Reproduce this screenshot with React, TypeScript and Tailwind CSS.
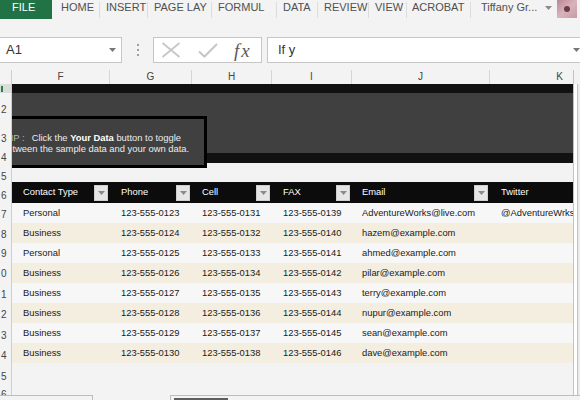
import { Fragment } from "react";

const tabs = [
  { label: "HOME", cls: "w-[48px] pl-[9px]" },
  { label: "INSERT", cls: "w-[48px] pl-[6px]" },
  { label: "PAGE LAY", cls: "w-[64px] pl-[6px]" },
  { label: "FORMUL", cls: "w-[65px] pl-[6px]" },
  { label: "DATA", cls: "w-[41px] pl-[6px]" },
  { label: "REVIEW", cls: "w-[51px] pl-[6px]" },
  { label: "VIEW", cls: "w-[38px] pl-[6px]" },
  { label: "ACROBAT", cls: "w-[64px] pl-[5px]" },
];

const cols = [
  { letter: "F", w: "w-[98px]", pl: "pl-[11px]" },
  { letter: "G", w: "w-[82px]", pl: "pl-[11px]" },
  { letter: "H", w: "w-[80px]", pl: "pl-[10px]" },
  { letter: "I", w: "w-[80px]", pl: "pl-[11px]" },
  { letter: "J", w: "w-[138px]", pl: "pl-[10px]" },
  { letter: "K", w: "w-[140px]", pl: "pl-[11px]" },
];

const headers = ["Contact Type", "Phone", "Cell", "FAX", "Email", "Twitter"];

const rows = [
  ["Personal", "123-555-0123", "123-555-0131", "123-555-0139", "AdventureWorks@live.com", "@AdventureWrks"],
  ["Business", "123-555-0124", "123-555-0132", "123-555-0140", "hazem@example.com", ""],
  ["Personal", "123-555-0125", "123-555-0133", "123-555-0141", "ahmed@example.com", ""],
  ["Business", "123-555-0126", "123-555-0134", "123-555-0142", "pilar@example.com", ""],
  ["Business", "123-555-0127", "123-555-0135", "123-555-0143", "terry@example.com", ""],
  ["Business", "123-555-0128", "123-555-0136", "123-555-0144", "nupur@example.com", ""],
  ["Business", "123-555-0129", "123-555-0137", "123-555-0145", "sean@example.com", ""],
  ["Business", "123-555-0130", "123-555-0138", "123-555-0146", "dave@example.com", ""],
];

const rowHeads = [
  { h: "h-[31px]", n: "2", pt: "pt-[12px]" },
  { h: "h-[29px]", n: "3", pt: "pt-[10px]" },
  { h: "h-[10px]", n: "4", pt: "pt-0" },
  { h: "h-[19px]", n: "5", pt: "pt-[9px]" },
  { h: "h-[21px]", n: "6", pt: "pt-[9px]" },
  { h: "h-[20px]", n: "7", pt: "pt-[7px]" },
  { h: "h-[20px]", n: "8", pt: "pt-[7px]" },
  { h: "h-[20px]", n: "9", pt: "pt-[6px]" },
  { h: "h-[20px]", n: "0", pt: "pt-[6px]" },
  { h: "h-[20px]", n: "1", pt: "pt-[7px]" },
  { h: "h-[20px]", n: "2", pt: "pt-[7px]" },
  { h: "h-[20px]", n: "3", pt: "pt-[8px]" },
  { h: "h-[20px]", n: "4", pt: "pt-[8px]" },
  { h: "h-[20px]", n: "5", pt: "pt-[9px]" },
  { h: "h-[20px]", n: "6", pt: "pt-[7px]" },
];

function Caret({ color = "#7a7a7a" }: { color?: string }) {
  return (
    <svg width="7" height="4" viewBox="0 0 7 4">
      <path d="M0 0H7L3.5 4Z" fill={color} />
    </svg>
  );
}

function FilterButton() {
  return (
    <div className="flex h-[16px] w-[14px] shrink-0 items-center justify-center border border-[#cfcfcf] bg-[#e6e6e6]">
      <Caret color="#8a8a8a" />
    </div>
  );
}

export default function App() {
  return (
    <div className="flex h-[400px] w-[580px] flex-col overflow-hidden bg-[#f3f3f3] font-['Liberation_Sans',Arial,sans-serif] text-[#222]">
      {/* ribbon tabs */}
      <div className="flex h-[19px] shrink-0 text-[11px] leading-[15px] text-[#505050]">
        <div className="h-full w-[52px] bg-[#217346] pl-[12px] text-white">FILE</div>
        {tabs.map((t) => (
          <div key={t.label} className={`${t.cls} flex h-full items-start justify-between`}>
            <span className="whitespace-nowrap">{t.label}</span>
            <span className="mt-[2px] h-[16px] w-px bg-[#dcdcdc]" />
          </div>
        ))}
        <div className="flex flex-1 items-start pl-[10px]">
          <span className="whitespace-nowrap">Tiffany Gr...</span>
          <span className="ml-[8px] mt-[6px]">
            <Caret color="#8a8a8a" />
          </span>
          <div className="ml-[5px] flex h-[18px] w-[20px] items-center justify-center bg-gradient-to-br from-[#b98592] via-[#d9b3bb] to-[#c79aa4]">
            <div className="h-[6px] w-[6px] rounded-full bg-[#6e3a48]" />
          </div>
        </div>
      </div>

      <div className="h-[18px] shrink-0" />

      {/* formula bar */}
      <div className="flex h-[26px] shrink-0 items-stretch text-[13px] text-[#333]">
        <div className="flex w-[122px] items-center justify-between border-y border-r border-[#c6c6c6] bg-white pl-[6px] pr-[5px]">
          <span>A1</span>
          <Caret color="#777" />
        </div>
        <div className="flex w-[31px] flex-col items-center justify-center gap-[3px]">
          <span className="h-[2px] w-[2px] bg-[#a0a0a0]" />
          <span className="h-[2px] w-[2px] bg-[#a0a0a0]" />
          <span className="h-[2px] w-[2px] bg-[#a0a0a0]" />
        </div>
        <div className="flex w-[109px] items-center border border-[#c6c6c6] bg-white">
          <svg className="ml-[7px]" width="20" height="16" viewBox="0 0 20 16">
            <path d="M1.5 1L18.5 15M18.5 1L1.5 15" stroke="#c6c6c6" strokeWidth="1.7" fill="none" />
          </svg>
          <svg className="ml-[17px]" width="20" height="15" viewBox="0 0 20 15">
            <path d="M1 8.5L6.5 13.5L19 1" stroke="#c6c6c6" strokeWidth="2" fill="none" />
          </svg>
          <span className="ml-[16px] font-['Liberation_Serif',serif] text-[19px] italic leading-none tracking-[2px] text-[#5a5a5a]">
            fx
          </span>
        </div>
        <div className="w-[5px]" />
        <div className="flex flex-1 items-center justify-between border-y border-l border-[#c6c6c6] bg-white pl-[10px]">
          <span>If y</span>
          <Caret color="#777" />
        </div>
      </div>

      <div className="h-[7px] shrink-0" />

      {/* column letters */}
      <div className="flex h-[14px] shrink-0 text-[10px] leading-[14px] text-[#444]">
        <div className="w-[12px] border-r border-[#cfcfcf]" />
        <div className="flex w-[561px] overflow-hidden">
          {cols.map((c) => (
            <div key={c.letter} className={`${c.w} shrink-0 border-r border-[#d6d6d6] text-center`}>
              {c.letter}
            </div>
          ))}
        </div>
        <div className="w-[7px] border-l border-[#c2c2c2]" />
      </div>

      {/* sheet */}
      <div className="flex h-[311px] shrink-0">
        <div className="w-[12px] shrink-0 overflow-hidden border-r border-[#cfcfcf] text-[10px] leading-[10px] text-[#444]">
          <div className="flex h-[9px] items-center bg-[#d9dedb] pl-[1px]">
            <div className="h-[6px] w-[2px] bg-[#2e7d4f]" />
          </div>
          {rowHeads.map((r, i) => (
            <div key={i} className={`${r.h} ${r.pt} pl-[1px]`}>
              {r.n}
            </div>
          ))}
        </div>

        <div className="relative w-[561px] shrink-0 overflow-hidden text-[9.4px]">
          <div className="h-[9px] bg-[#111]" />
          <div className="h-[60px] bg-[#404040]" />
          <div className="h-[10px] bg-[#111]" />
          <div className="h-[19px]" />
          <div className="flex h-[21px] bg-[#0c0c0c] text-white">
            {cols.map((c, i) => (
              <div key={c.letter} className={`${c.w} ${c.pl} flex shrink-0 items-center justify-between pr-[2px]`}>
                <span className="whitespace-nowrap">{headers[i]}</span>
                {i < 5 && <FilterButton />}
              </div>
            ))}
          </div>
          {rows.map((r, ri) => (
            <div key={ri} className={`flex h-[20px] ${ri % 2 === 0 ? "bg-[#f7f7f7]" : "bg-[#f3eee0]"} text-[#1a1a1a]`}>
              {cols.map((c, ci) => (
                <Fragment key={c.letter}>
                  <div className={`${c.w} ${c.pl} flex shrink-0 items-center whitespace-nowrap`}>{r[ci]}</div>
                </Fragment>
              ))}
            </div>
          ))}

          {/* tip shape */}
          <div className="absolute left-0 top-[32px] h-[52px] w-[195px] overflow-hidden border-[3px] border-l-0 border-black bg-[#404040] pt-[14px] text-[9.4px] leading-[10.5px] text-[#ececec]">
            <div className="whitespace-nowrap">
              <span className="ml-[-7px] text-[#a9bfa9]">TIP :</span>
              <span className="ml-[7px]">
                Click the <b className="text-white">Your Data</b> button to toggle
              </span>
            </div>
            <div className="ml-[-10px] whitespace-nowrap">between the sample data and your own data.</div>
          </div>
        </div>

        <div className="flex w-[7px] shrink-0 justify-end border-l border-[#c2c2c2] bg-white">
          <div className="w-[3px] border-l border-[#c2c2c2] bg-[#ececec]" />
        </div>
      </div>

      {/* bottom bar */}
      <div className="flex h-[5px] shrink-0">
        <div className="w-[93px] border-r border-t border-[#bdbdbd]" />
        <div className="w-[77px]" />
        <div className="flex-1 border-l border-t border-[#bdbdbd] pl-[3px] pt-[2px]">
          <div className="h-[2px] w-[54px] bg-[#5e5e5e]" />
        </div>
      </div>
    </div>
  );
}
